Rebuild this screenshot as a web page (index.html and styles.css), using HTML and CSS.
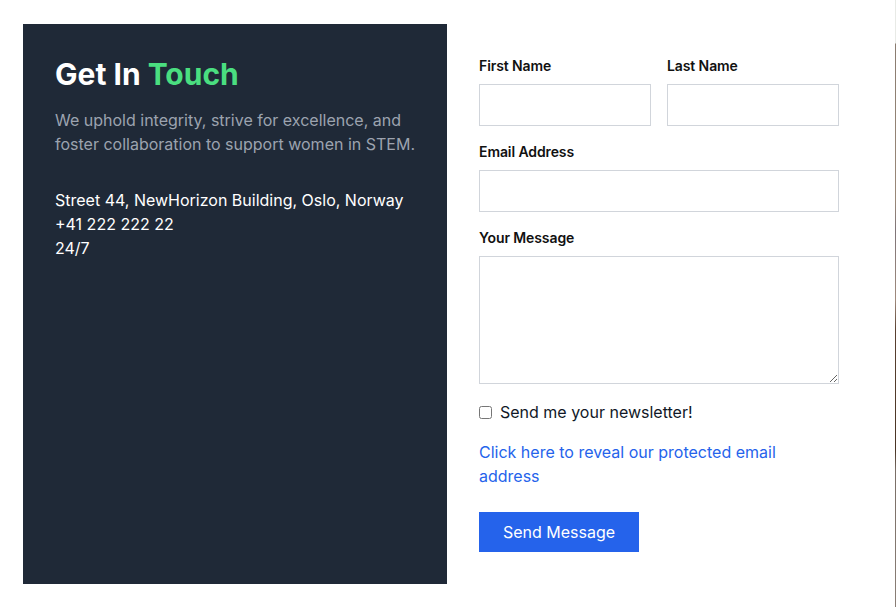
FILE: index.html
```html
<!DOCTYPE html>
<html lang="en">
<head>
<meta charset="utf-8">
<title>Get In Touch</title>
<link rel="stylesheet" href="styles.css">
</head>
<body>
<div class="edge-strip"></div>
<section class="contact">
  <div class="info">
    <h1 class="title">Get In <span class="accent">Touch</span></h1>
    <p class="lead">We uphold integrity, strive for excellence, and foster collaboration to support women in STEM.</p>
    <div class="details">
      <div>Street 44, NewHorizon Building, Oslo, Norway</div>
      <div>+41 222 222 22</div>
      <div>24/7</div>
    </div>
  </div>
  <form class="form">
    <div class="row">
      <label class="field">
        <span class="label">First Name</span>
        <input class="input" type="text">
      </label>
      <label class="field">
        <span class="label">Last Name</span>
        <input class="input" type="text">
      </label>
    </div>
    <label class="field">
      <span class="label">Email Address</span>
      <input class="input" type="email">
    </label>
    <label class="field">
      <span class="label">Your Message</span>
      <textarea class="textarea"></textarea>
    </label>
    <label class="check">
      <input class="checkbox" type="checkbox">
      <span>Send me your newsletter!</span>
    </label>
    <a class="link" href="#">Click here to reveal our protected email address</a>
    <div class="actions">
      <button class="button" type="button">Send Message</button>
    </div>
  </form>
</section>
</body>
</html>
```
FILE: styles.css
```css
* { box-sizing: border-box; }
html, body { margin: 0; background: #fff; }
body {
  font-family: Inter, "Noto Sans", sans-serif;
  padding: 24px 0 23px 23px;
  color: #111827;
}
.edge-strip {
  position: absolute;
  top: 0;
  right: 0;
  width: 1px;
  height: 607px;
  background: linear-gradient(#e8eae6 0, #e8eae6 43px, #8a7c70 44px, #9a8878 200px, #7f7478 230px, #a08a7c 300px, #5a4030 330px, #4a3424 450px, #7a6e66 470px, #8a7e76 607px);
}
.contact {
  width: 848px;
  display: grid;
  grid-template-columns: 424px 424px;
}
.info {
  background: #1f2937;
  padding: 32px;
}
.title {
  margin: 0;
  font-size: 30px;
  line-height: 36px;
  font-weight: 700;
  color: #fff;
}
.accent { color: #4ade80; }
.lead {
  margin: 16px 0 32px;
  font-size: 16px;
  line-height: 24px;
  color: #9ca3af;
}
.details {
  font-size: 16px;
  line-height: 24px;
  color: #fff;
}
.form {
  padding: 32px;
  display: flex;
  flex-direction: column;
  gap: 16px;
}
.row {
  display: grid;
  grid-template-columns: 1fr 1fr;
  gap: 16px;
}
.field {
  display: flex;
  flex-direction: column;
  gap: 8px;
}
.label {
  font-size: 14px;
  line-height: 20px;
  font-weight: 600;
  color: #111;
  letter-spacing: -0.1px;
}
.input, .textarea {
  display: block;
  width: 100%;
  border: 1px solid #d1d5db;
  border-radius: 0;
  background: #fff;
  font: inherit;
  margin: 0;
}
.input { height: 42px; }
.textarea { height: 128px; resize: vertical; }
.check {
  display: flex;
  align-items: center;
  gap: 8px;
  font-size: 16px;
  line-height: 24px;
  color: #111827;
}
.checkbox {
  margin: 0;
  width: 13px;
  height: 13px;
}
.link {
  font-size: 16px;
  line-height: 24px;
  color: #2563eb;
  text-decoration: none;
}
.actions { padding-top: 8px; }
.button {
  display: block;
  width: 160px;
  height: 40px;
  border: 0;
  border-radius: 0;
  background: #2563eb;
  color: #fff;
  font-family: Inter, "Noto Sans", sans-serif;
  font-size: 16px;
  line-height: 24px;
  padding: 8px 0;
  white-space: nowrap;
  text-align: center;
}
```
